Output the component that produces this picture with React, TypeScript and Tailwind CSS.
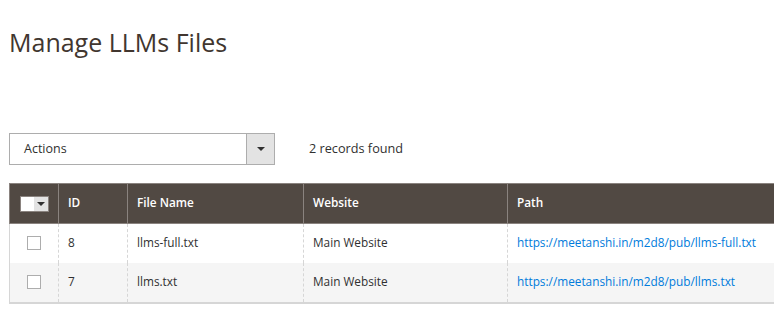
const rows = [
  { id: 8, name: "llms-full.txt", website: "Main Website", path: "https://meetanshi.in/m2d8/pub/llms-full.txt" },
  { id: 7, name: "llms.txt", website: "Main Website", path: "https://meetanshi.in/m2d8/pub/llms.txt" },
];

function Checkbox() {
  return <div className="w-[14px] h-[14px] border border-[#adadad] bg-white mx-auto" />;
}

export default function App() {
  return (
    <div className="w-[774px] h-[318px] bg-white overflow-hidden font-['Open_Sans',sans-serif] text-[#303030]">
      <h1 className="pl-[9px] pt-[26px] text-[25px] leading-[32px] text-[#41362f] font-normal">Manage LLMs Files</h1>

      {/* toolbar */}
      <div className="flex items-center pl-[9px] mt-[75px] h-[32px]">
        <div className="flex w-[266px] h-[32px] border border-[#adadad] bg-white">
          <div className="flex-1 flex items-center pl-[14px] text-[12.5px]">Actions</div>
          <div className="w-[28px] border-l border-[#adadad] bg-[#e3e3e3] flex items-center justify-center">
            <div className="w-0 h-0 border-l-[4px] border-r-[4px] border-t-[4px] border-l-transparent border-r-transparent border-t-[#303030]" />
          </div>
        </div>
        <div className="ml-[34px] text-[12.7px]">2 records found</div>
      </div>

      {/* grid */}
      <div className="pl-[9px] mt-[18px]">
        <table className="table-fixed border-collapse w-[820px] text-[11.8px]">
          <colgroup>
            <col className="w-[49px]" />
            <col className="w-[69px]" />
            <col className="w-[176px]" />
            <col className="w-[204px]" />
            <col className="w-[322px]" />
          </colgroup>
          <thead>
            <tr className="bg-[#514943] text-white h-[40px]">
              <th className="border border-[#8a837f] p-0">
                <div className="flex items-center justify-center">
                  <div className="flex h-[16px] border border-[#8a837f]">
                    <div className="w-[13px] bg-white" />
                    <div className="w-[14px] bg-[#e3e3e3] flex items-center justify-center">
                      <div className="w-0 h-0 border-l-[4px] border-r-[4px] border-t-[4px] border-l-transparent border-r-transparent border-t-[#303030]" />
                    </div>
                  </div>
                </div>
              </th>
              {["ID", "File Name", "Website", "Path"].map((h) => (
                <th key={h} className="border border-[#8a837f] px-[9px] pb-[2px] text-left font-semibold">
                  {h}
                </th>
              ))}
            </tr>
          </thead>
          <tbody>
            {rows.map((r, i) => (
              <tr key={r.id} className={i % 2 ? "bg-[#f5f5f5] h-[40px]" : "bg-white h-[39px]"}>
                <td className="border-l border-l-[#d6d6d6] p-0 align-middle">
                  <Checkbox />
                </td>
                <td className="border-l border-dashed border-[#d6d6d6] px-[9px] pb-[1px] align-middle">{r.id}</td>
                <td className="border-l border-dashed border-[#d6d6d6] px-[9px] pb-[1px] align-middle">{r.name}</td>
                <td className="border-l border-dashed border-[#d6d6d6] px-[9px] pb-[1px] align-middle">{r.website}</td>
                <td className="border-l border-dashed border-[#d6d6d6] px-[9px] pb-[1px] align-middle">
                  <a className="text-[#007bdb]" href="#">{r.path}</a>
                </td>
              </tr>
            ))}
            <tr>
              <td colSpan={5} className="h-0 p-0 border-t-2 border-[#d6d6d6]" />
            </tr>
          </tbody>
        </table>
      </div>
    </div>
  );
}
